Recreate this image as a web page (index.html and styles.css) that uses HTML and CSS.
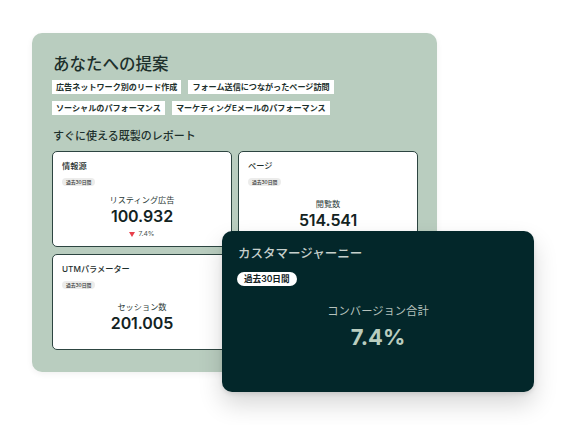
FILE: index.html
```html
<!DOCTYPE html>
<html lang="ja">
<head>
<meta charset="utf-8">
<link rel="stylesheet" href="styles.css">
</head>
<body>
<div class="stage">
  <section class="panel">
    <h1 class="panel-title">あなたへの提案</h1>
    <div class="tags">
      <span class="tag">広告ネットワーク別のリード作成</span>
      <span class="tag">フォーム送信につながったページ訪問</span>
      <span class="tag">ソーシャルのパフォーマンス</span>
      <span class="tag">マーケティングEメールのパフォーマンス</span>
    </div>
    <h2 class="section-title">すぐに使える既製のレポート</h2>
    <div class="cards">
      <div class="card">
        <div class="card-label">情報源</div>
        <span class="badge">過去30日間</span>
        <div class="metric">
          <div class="metric-label">リスティング広告</div>
          <div class="metric-value">100.932</div>
          <div class="metric-change"><span class="tri"></span>7.4%</div>
        </div>
      </div>
      <div class="card">
        <div class="card-label">ページ</div>
        <span class="badge">過去30日間</span>
        <div class="metric metric-plain">
          <div class="metric-label">閲覧数</div>
          <div class="metric-value">514.541</div>
        </div>
      </div>
      <div class="card">
        <div class="card-label">UTMパラメーター</div>
        <span class="badge">過去30日間</span>
        <div class="metric metric-plain">
          <div class="metric-label">セッション数</div>
          <div class="metric-value">201.005</div>
        </div>
      </div>
      <div class="card"></div>
    </div>
  </section>
  <section class="journey">
    <div class="journey-title">カスタマージャーニー</div>
    <span class="journey-badge">過去30日間</span>
    <div class="journey-metric">
      <div class="journey-label">コンバージョン合計</div>
      <div class="journey-value">7.4%</div>
    </div>
  </section>
</div>
</body>
</html>
```
FILE: styles.css
```css
* { box-sizing: border-box; }
html, body { margin: 0; padding: 0; background: #ffffff; }
body {
  width: 567px;
  height: 425px;
  overflow: hidden;
  font-family: "Inter", "Noto Sans CJK JP", sans-serif;
  color: #1c2c29;
}
.stage {
  position: relative;
  width: 567px;
  height: 425px;
  padding: 33px 0 0 32px;
}
.panel {
  width: 405px;
  height: 339px;
  background: #b9cdbf;
  border-radius: 10px;
  padding: 19px 19px 0 20px;
  box-shadow: 0 2px 6px rgba(0, 0, 0, 0.06);
}
.panel-title {
  margin: 0 0 0 1px;
  font-size: 16.5px;
  line-height: 24px;
  font-weight: 500;
  color: #1d302c;
}
.tags {
  margin-top: 4px;
  display: flex;
  flex-wrap: wrap;
  gap: 7px 7px;
  width: 290px;
}
.tag {
  background: #ffffff;
  font-size: 8.1px;
  line-height: 14px;
  height: 14px;
  padding: 0 4px;
  font-weight: 600;
  color: #1d302c;
  white-space: nowrap;
}
.section-title {
  margin: 13px 0 0 1px;
  font-size: 11px;
  line-height: 16px;
  font-weight: 500;
  color: #1d302c;
}
.cards {
  margin-top: 7px;
  display: grid;
  grid-template-columns: 180px 180px;
  grid-template-rows: 96px 96px;
  gap: 7px 6px;
}
.card {
  background: #ffffff;
  border: 1px solid #2d4541;
  border-radius: 5px;
  padding: 8px 9px 0 9px;
  display: flex;
  flex-direction: column;
  align-items: flex-start;
}
.card-label {
  font-size: 8.2px;
  line-height: 12px;
  font-weight: 500;
  color: #1d2e2b;
}
.badge {
  margin-top: 6px;
  background: #ececeb;
  border-radius: 5px;
  font-size: 4.8px;
  line-height: 8px;
  height: 8px;
  padding: 0 4px;
  color: #333;
  font-weight: 500;
}
.metric {
  align-self: stretch;
  text-align: center;
  margin-top: 8px;
}
.metric-plain { margin-top: 12px; }
.metric-label {
  font-size: 8.2px;
  line-height: 12px;
  color: #2b3a37;
}
.metric-value {
  font-size: 16px;
  line-height: 20px;
  font-weight: 600;
  color: #13231f;
  letter-spacing: -0.1px;
}
.metric-change {
  margin-top: 3px;
  font-size: 6.8px;
  line-height: 10px;
  color: #4a5552;
  display: flex;
  justify-content: center;
  align-items: center;
  gap: 3px;
}
.tri {
  width: 0;
  height: 0;
  border-left: 3.5px solid transparent;
  border-right: 3.5px solid transparent;
  border-top: 5px solid #e8404c;
}
.journey {
  position: absolute;
  left: 222px;
  top: 231px;
  width: 312px;
  height: 161px;
  background: #03272a;
  border-radius: 10px;
  padding: 14px 16px 0 16px;
  box-shadow: 0 12px 24px rgba(0, 0, 0, 0.16), 0 2px 4px rgba(0, 0, 0, 0.1);
  display: flex;
  flex-direction: column;
  align-items: flex-start;
}
.journey-title {
  font-size: 12.5px;
  line-height: 18px;
  color: #c6d0cc;
  font-weight: 500;
}
.journey-badge {
  margin-top: 9px;
  margin-left: -1px;
  background: #ffffff;
  border-radius: 7px;
  height: 14px;
  line-height: 14px;
  font-size: 8.6px;
  padding: 0 7px;
  color: #10201d;
  font-weight: 600;
}
.journey-metric {
  align-self: stretch;
  text-align: center;
  margin-top: 17px;
}
.journey-label {
  font-size: 11.3px;
  line-height: 16px;
  color: #b5c2bd;
}
.journey-value {
  margin-top: 5px;
  font-size: 22px;
  line-height: 26px;
  font-weight: 700;
  color: #b9cdbf;
}
```
